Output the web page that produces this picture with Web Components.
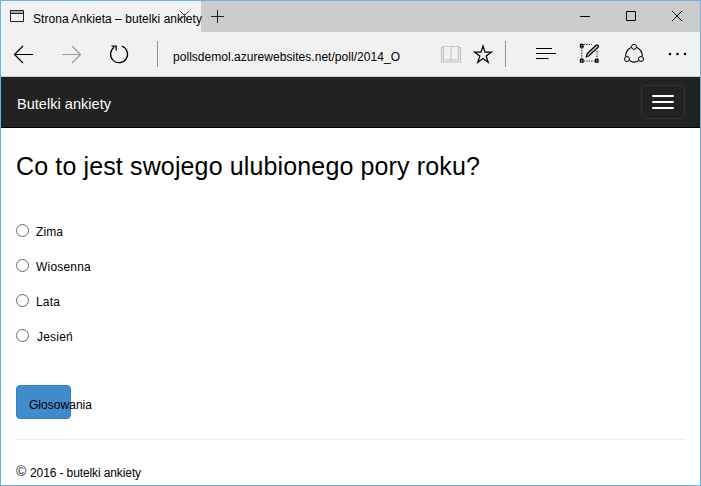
<!DOCTYPE html>
<html lang="pl">
<head>
<meta charset="utf-8">
<title>Strona Ankieta – butelki ankiety</title>
<style>
html,body{margin:0;width:701px;height:486px;overflow:hidden;background:#fff}
body{font-family:"Liberation Sans",Arial,sans-serif;font-size:12px;color:#000}
</style>
</head>
<body>
<browser-window>
  <tab-strip slot="chrome"><fit-text width="169">Strona Ankieta – butelki ankiety</fit-text></tab-strip>
  <address-bar slot="chrome"><fit-text width="227">pollsdemol.azurewebsites.net/poll/2014_O</fit-text></address-bar>
  <site-navbar><fit-text width="94">Butelki ankiety</fit-text></site-navbar>
  <poll-form>
    <fit-text slot="question" width="464">Co to jest swojego ulubionego pory roku?</fit-text>
    <poll-option><fit-text width="27">Zima</fit-text></poll-option>
    <poll-option><fit-text width="55">Wiosenna</fit-text></poll-option>
    <poll-option><fit-text width="24">Lata</fit-text></poll-option>
    <poll-option style="--gap:8px"><fit-text width="36">Jesień</fit-text></poll-option>
    <vote-button slot="action"><fit-text width="63">Głosowania</fit-text></vote-button>
  </poll-form>
  <site-footer><fit-text width="111">2016 - butelki ankiety</fit-text></site-footer>
</browser-window>
<script>
const define = (name, html, ready) => customElements.define(name, class extends HTMLElement {
  constructor() {
    super();
    this.attachShadow({mode: 'open'}).innerHTML = html;
  }
  connectedCallback() { if (ready) ready(this); }
});

define('browser-window', `
<style>
:host{display:flex;flex-direction:column;box-sizing:border-box;width:701px;height:486px;border:1px solid #62b4ea;background:#fff;overflow:hidden}
</style><slot name="chrome"></slot><slot></slot>`);

define('tab-strip', `
<style>
:host{display:flex;height:31px;background:#ccc;flex:none}
.tab{position:relative;width:200px;background:#f1f1f1;display:flex;padding:9px 0 0 9px;box-sizing:border-box;gap:9px}
.tab svg{flex:none}
::slotted(*){line-height:16px;margin-top:1px}
.close{position:absolute;left:178px;top:9px}
.plus{margin:8px 0 0 10px}
.controls{display:flex;margin-left:auto;padding:8px 15px 0 0;gap:30px}
svg{display:block}
</style>
<div class="tab">
<svg width="14" height="12" viewBox="0 0 14 12"><path d="M1 1h12v2H1z" fill="#aaa"/><path d="M.5 .5h13v11H.5zM0 3.5h14" fill="none" stroke="#222"/></svg>
<slot></slot>
<svg class="close" width="11" height="11" viewBox="0 0 11 11"><path d="M1 1l9 9M10 1l-9 9" stroke="#444"/></svg>
</div>
<svg class="plus" width="13" height="14" viewBox="0 0 13 14"><path d="M0 7.5h13M6.5 1v13" stroke="#222"/></svg>
<div class="controls">
<svg width="16" height="16"><path d="M3 7.5h10" stroke="#000"/></svg>
<svg width="16" height="16"><path d="M3.5 2.5h9v9h-9z" fill="none" stroke="#000"/></svg>
<svg width="16" height="16"><path d="M3 2l10 10M13 2L3 12" stroke="#000"/></svg>
</div>`);

define('address-bar', `
<style>
:host{display:block;height:44px;background:#f1f1f1;border-bottom:1px solid #ccc;flex:none}
.row{display:grid;height:44px;grid-template-columns:12px 48px 48px 48px 16px 268px 32px 32px 32px 44px 44px 42px 1fr;align-items:start}
svg{display:block;margin-top:11px;fill:none;stroke:#000;overflow:visible}
.url{padding-top:17px;line-height:16px}
.line{width:1px;height:26px;background:#8f8f8f;margin-top:9px}
</style>
<div class="row">
<span></span>
<svg width="22" height="22"><path d="M1.5 11.5H20M10 3L1.5 11.5L10 20" stroke-width="1.2"/></svg>
<svg width="22" height="22"><path d="M1 11.5H19.5M11 3l8.5 8.5L11 20" stroke="#999" stroke-width="1.2"/></svg>
<svg width="22" height="22"><path d="M13 3.2A8.5 8.5 0 1 1 5.2 4.2M2.6 3H7.2V7.4" stroke-width="1.25"/></svg>
<span class="line"></span>
<div class="url"><slot></slot></div>
<svg width="22" height="22"><path d="M10 3.5H2.500V17H10M10 3.500H17.500V17H10M10 3.500V18.500M2 4.500H.5v14.500h19V4.500H18" stroke="#c4c4c4" stroke-width="1.2"/></svg>
<svg width="22" height="22"><path d="M10 3l2 6.200h6.400l-5.200 3.900 2 6.100-5.200-3.700-5.200 3.700 2-6.100-5.200-3.900h6.400z" stroke-width="1.300"/></svg>
<span class="line"></span>
<svg width="22" height="22"><path d="M-1 5.500H15M-1 10.500H19M-1 15.500H11.500"/></svg>
<svg width="22" height="22"><path d="M.8 5v11M3 1.500h8M3 18h12M16 8v8" stroke="#222" stroke-width="1.1" stroke-dasharray="1.200 1.200"/><path d="M-.5 1.500h2.500V4H-.5zM-.5 16.500h2.500V19H-.5zM14.500 16.500H17V19h-2.500z" stroke-width="1.300"/><path d="M15 2.300q1.200-1 2.100 0t0 2.100L8 12.700l-2.700 1 .8-2.900z" fill="#bbb" stroke-width="1.200"/></svg>
<svg width="22" height="22"><circle cx="9" cy="3.800" r="2.500"/><circle cx="2" cy="16" r="2.500"/><circle cx="16" cy="16" r="2.500"/><path d="M6.500 4.300Q.6 7 .7 13.400M11.500 4.300Q17.400 7 17.300 13.400M4.500 17.500Q9 20.800 13.500 17.500" stroke-width="1.200"/></svg>
<svg width="22" height="22"><g fill="#000" stroke="none"><circle cx="3" cy="11" r="1.250"/><circle cx="10.500" cy="11" r="1.250"/><circle cx="18" cy="11" r="1.250"/></g></svg>
</div>`);

define('site-navbar', `
<style>
:host{display:flex;box-sizing:border-box;height:51px;background:#222;border-bottom:1px solid #000;padding:8px 15px 0 16px;justify-content:space-between;align-items:flex-start;color:#fff;font-size:14.5px;flex:none}
::slotted(*){line-height:20px;margin-top:9px}
.menu{width:44px;height:34px;box-sizing:border-box;border:1px solid #333;border-radius:4px;display:flex;flex-direction:column;gap:4px;padding:9px 10px}
.menu i{height:2px;background:#fff;border-radius:1px}
</style><slot></slot><div class="menu"><i></i><i></i><i></i></div>`);

define('poll-form', `
<style>
:host{display:block;padding:0 15px;flex:none}
.q{font-size:25px;line-height:30px;padding-top:23px;height:40px}
.list{display:flex;flex-direction:column;gap:19px;padding-top:32px}
.action{padding:41px 0 20px;border-bottom:1px solid #eee}
</style>
<div class="q"><slot name="question"></slot></div>
<div class="list"><slot></slot></div>
<div class="action"><slot name="action"></slot></div>`);

define('poll-option', `
<style>
:host{display:flex;height:16px;line-height:16px;gap:var(--gap,7px)}
i{width:13px;height:13px;box-sizing:border-box;border:1px solid #666;border-radius:50%;background:#fff;margin-top:1px}
::slotted(*){margin-top:1px}
</style><i></i><slot></slot>`);

define('vote-button', `
<style>
:host{display:block;box-sizing:border-box;width:55px;height:34px;background:#428bca;border:1px solid #357ebd;border-radius:4px;padding:11px 0 0 12px;line-height:16px;white-space:nowrap}
</style><slot></slot>`);

define('site-footer', `
<style>
:host{display:flex;gap:3px;padding:25px 15px 0;line-height:16px}
.c{font-size:14px;width:11px;margin-top:-2px;color:#222}
</style><span class="c">©</span><slot></slot>`);

/* Spreads its characters evenly over the given width. */
define('fit-text', `<style>:host{display:block;white-space:nowrap}span{display:inline-block}</style><span><slot></slot></span>`, el => {
  requestAnimationFrame(() => {
    const span = el.shadowRoot.querySelector('span');
    const n = el.textContent.length;
    span.style.letterSpacing = (el.getAttribute('width') - span.getBoundingClientRect().width) / n + 'px';
  });
});
</script>
</body>
</html>
